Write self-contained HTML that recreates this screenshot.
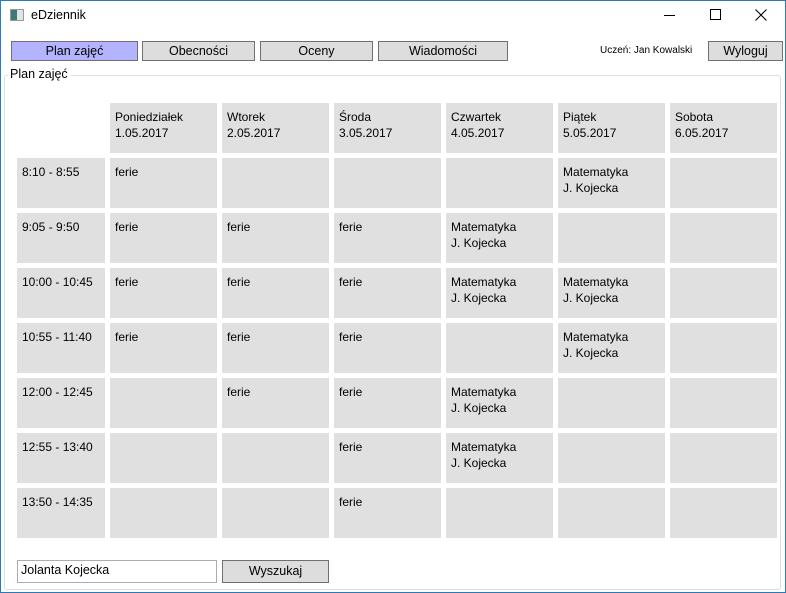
<!DOCTYPE html>
<html><head><meta charset="utf-8"><style>
*{margin:0;padding:0;box-sizing:border-box}
body{width:786px;height:593px;overflow:hidden;background:#fff;font-family:"Liberation Sans",sans-serif;font-size:12px;color:#000;position:relative}
.win{position:absolute;left:0;top:0;width:786px;height:593px;border:1px solid #2b7ab8}
.abs{position:absolute}
.btn{position:absolute;height:20px;background:#dddddd;border:1px solid #707070;text-align:center;line-height:18px;font-size:12.5px}
.grid{position:absolute;left:17px;top:103px;display:grid;grid-template-columns:88px repeat(6,107px);grid-template-rows:50px repeat(7,50px);column-gap:5px;row-gap:5px}
.grid div{background:#e0e0e0;padding:6px 5px;line-height:16px;font-size:12px}
.grid div.e{background:transparent}
</style></head><body>
<div class="win"></div>
<div class="abs" style="left:10px;top:9px;width:14px;height:12px;border:1px solid #999;background:linear-gradient(90deg,#3c7a76 0 50%,#dfe6ea 50%)"></div>
<div class="abs" style="left:31px;top:8px;font-size:12.5px">eDziennik</div>
<div class="abs" style="left:664px;top:15px;width:11px;height:1px;background:#000"></div>
<div class="abs" style="left:710px;top:9px;width:11px;height:11px;border:1px solid #000"></div>
<svg class="abs" style="left:755px;top:9px" width="12" height="12"><path d="M0.5 0.5L11.5 11.5M11.5 0.5L0.5 11.5" stroke="#000" stroke-width="1.1"/></svg>
<div class="btn" style="left:11px;top:41px;width:127px;background:#b4b4fe">Plan zajęć</div>
<div class="btn" style="left:142px;top:41px;width:113px">Obecności</div>
<div class="btn" style="left:260px;top:41px;width:113px">Oceny</div>
<div class="btn" style="left:378px;top:41px;width:130px">Wiadomości</div>
<div class="abs" style="left:600px;top:45px;font-size:10px">Uczeń: Jan Kowalski</div>
<div class="btn" style="left:708px;top:41px;width:75px">Wyloguj</div>
<div class="abs" style="left:4px;top:75px;width:777px;height:515px;border:1px solid #d5dfe5;border-radius:3px"></div>
<div class="abs" style="left:8px;top:67px;background:#fff;padding:0 3px 0 2px;font-size:12.5px">Plan zajęć</div>
<div class="grid">
<div class="e"></div><div>Poniedziałek<br>1.05.2017</div><div>Wtorek<br>2.05.2017</div><div>Środa<br>3.05.2017</div><div>Czwartek<br>4.05.2017</div><div>Piątek<br>5.05.2017</div><div>Sobota<br>6.05.2017</div>
<div>8:10 - 8:55</div><div>ferie</div><div></div><div></div><div></div><div>Matematyka<br>J. Kojecka</div><div></div>
<div>9:05 - 9:50</div><div>ferie</div><div>ferie</div><div>ferie</div><div>Matematyka<br>J. Kojecka</div><div></div><div></div>
<div>10:00 - 10:45</div><div>ferie</div><div>ferie</div><div>ferie</div><div>Matematyka<br>J. Kojecka</div><div>Matematyka<br>J. Kojecka</div><div></div>
<div>10:55 - 11:40</div><div>ferie</div><div>ferie</div><div>ferie</div><div></div><div>Matematyka<br>J. Kojecka</div><div></div>
<div>12:00 - 12:45</div><div></div><div>ferie</div><div>ferie</div><div>Matematyka<br>J. Kojecka</div><div></div><div></div>
<div>12:55 - 13:40</div><div></div><div></div><div>ferie</div><div>Matematyka<br>J. Kojecka</div><div></div><div></div>
<div>13:50 - 14:35</div><div></div><div></div><div>ferie</div><div></div><div></div><div></div>
</div>
<div class="abs" style="left:17px;top:560px;width:200px;height:23px;border:1px solid #abadb3;padding:2px 3px;font-size:12.5px">Jolanta Kojecka</div>
<div class="btn" style="left:222px;top:560px;width:107px;height:23px;line-height:21px">Wyszukaj</div>
</body></html>
